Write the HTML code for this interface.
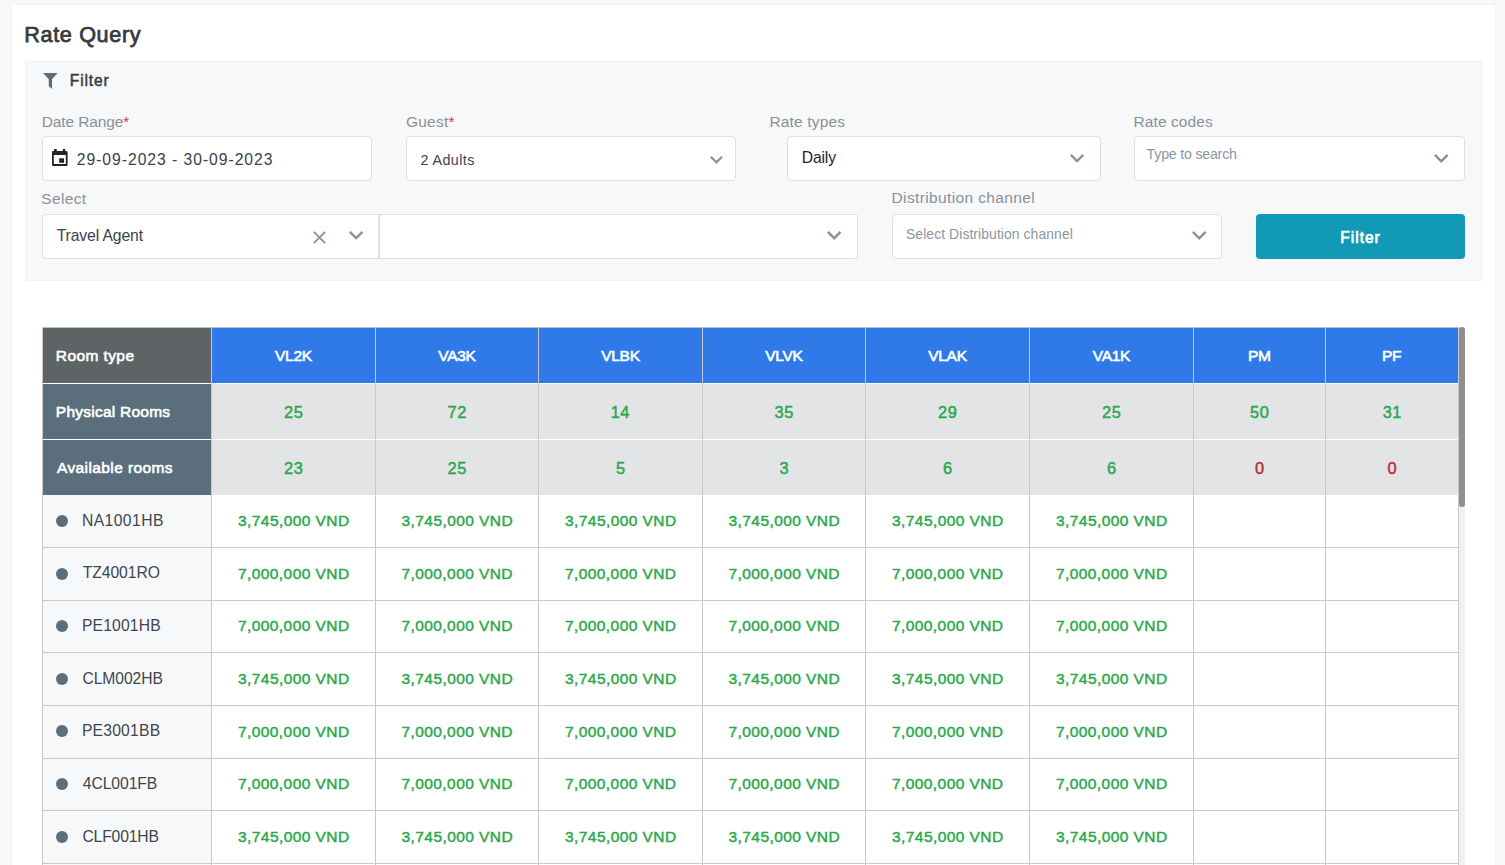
<!DOCTYPE html>
<html><head><meta charset="utf-8"><title>Rate Query</title>
<style>
html,body{margin:0;padding:0;width:1505px;height:865px;overflow:hidden;background:#f7f8fa;font-family:"Liberation Sans", sans-serif;}
body>div,body>svg{position:absolute;}
.t{white-space:nowrap;}
</style></head><body>
<div style="left:11px;top:4px;width:1485px;height:900px;background:#fff;border:1px solid #f1f3f5;box-sizing:border-box"></div>
<div class="t" style="left:24.30px;top:23.72px;font-size:21.6px;line-height:21.6px;font-weight:400;color:#343a40;-webkit-text-stroke:0.75px #343a40;letter-spacing:0.650px;">Rate Query</div>
<div style="left:25px;top:61px;width:1457px;height:220px;background:#f7f8fa;border:1px solid #f2f4f6;box-sizing:border-box"></div>
<svg style="left:43px;top:73px" width="15" height="16" viewBox="0 0 15 16"><path d="M0 0 H14.6 L9 6.2 V16 L5.8 13 V6.2 Z" fill="#5e6c79"/></svg>
<div class="t" style="left:69.80px;top:72.69px;font-size:15.6px;line-height:15.6px;font-weight:400;color:#343a40;-webkit-text-stroke:0.45px #343a40;letter-spacing:0.866px;">Filter</div>
<div class="t" style="left:41.80px;top:113.88px;font-size:15.5px;line-height:15.5px;font-weight:400;color:#8b9096;letter-spacing:-0.122px;">Date Range<span style="color:#e3342f">*</span></div>
<div class="t" style="left:405.90px;top:113.88px;font-size:15.5px;line-height:15.5px;font-weight:400;color:#8b9096;letter-spacing:0.269px;">Guest<span style="color:#e3342f">*</span></div>
<div class="t" style="left:769.40px;top:113.88px;font-size:15.5px;line-height:15.5px;font-weight:400;color:#8b9096;letter-spacing:0.173px;">Rate types</div>
<div class="t" style="left:1133.60px;top:113.88px;font-size:15.5px;line-height:15.5px;font-weight:400;color:#8b9096;letter-spacing:0.071px;">Rate codes</div>
<div style="left:42px;top:136px;width:330px;height:45px;background:#fff;border:1px solid #dde1e5;border-radius:4px;box-sizing:border-box"></div>
<div style="left:406px;top:136px;width:330px;height:45px;background:#fff;border:1px solid #dde1e5;border-radius:4px;box-sizing:border-box"></div>
<div style="left:787px;top:136px;width:314px;height:45px;background:#fff;border:1px solid #dde1e5;border-radius:4px;box-sizing:border-box"></div>
<div style="left:1134px;top:136px;width:331px;height:45px;background:#fff;border:1px solid #dde1e5;border-radius:4px;box-sizing:border-box"></div>
<svg style="left:51.9px;top:148.8px" width="16" height="17" viewBox="0 0 16 17"><rect x="2.1" y="0" width="2.6" height="3" fill="#212529"/><rect x="10.8" y="0" width="2.4" height="3" fill="#212529"/><path fill-rule="evenodd" fill="#212529" d="M1.2 2.1 H14.4 Q15.6 2.1 15.6 3.3 V15.7 Q15.6 16.9 14.4 16.9 H1.2 Q0 16.9 0 15.7 V3.3 Q0 2.1 1.2 2.1 Z M1.8 6.0 V15.1 H13.8 V6.0 Z"/><rect x="7.2" y="9.3" width="4.8" height="4.5" fill="#212529"/></svg>
<div class="t" style="left:76.80px;top:151.71px;font-size:15.7px;line-height:15.7px;font-weight:400;color:#3a4149;letter-spacing:0.966px;">29-09-2023 - 30-09-2023</div>
<div class="t" style="left:420.40px;top:152.80px;font-size:14.3px;line-height:14.3px;font-weight:400;color:#3c4450;letter-spacing:0.454px;">2 Adults</div>
<svg style="left:709.00px;top:155.00px" width="14.80" height="9.96" viewBox="0 0 14.80 9.96"><path d="M1.778 1.778 L7.400 7.400 L13.022 1.778" fill="none" stroke="#8693a0" stroke-width="2.2" stroke-linejoin="miter" stroke-linecap="butt"/></svg>
<div class="t" style="left:801.70px;top:149.61px;font-size:15.7px;line-height:15.7px;font-weight:400;color:#212529;letter-spacing:-0.136px;">Daily</div>
<svg style="left:1069.00px;top:152.80px" width="16.10" height="10.75" viewBox="0 0 16.10 10.75"><path d="M1.849 1.849 L8.050 8.050 L14.251 1.849" fill="none" stroke="#8693a0" stroke-width="2.4" stroke-linejoin="miter" stroke-linecap="butt"/></svg>
<div class="t" style="left:1146.60px;top:147.18px;font-size:14.2px;line-height:14.2px;font-weight:400;color:#8a96a3;letter-spacing:-0.211px;">Type to search</div>
<svg style="left:1433.30px;top:152.80px" width="16.50" height="10.95" viewBox="0 0 16.50 10.95"><path d="M1.849 1.849 L8.250 8.250 L14.651 1.849" fill="none" stroke="#8693a0" stroke-width="2.4" stroke-linejoin="miter" stroke-linecap="butt"/></svg>
<div class="t" style="left:41.30px;top:190.58px;font-size:15.5px;line-height:15.5px;font-weight:400;color:#8b9096;letter-spacing:0.345px;">Select</div>
<div class="t" style="left:891.50px;top:190.48px;font-size:15.5px;line-height:15.5px;font-weight:400;color:#8b9096;letter-spacing:0.374px;">Distribution channel</div>
<div style="left:42px;top:214px;width:337px;height:45px;background:#fff;border:1px solid #dde1e5;border-right:none;border-radius:4px 0 0 4px;box-sizing:border-box"></div>
<div style="left:378px;top:214px;width:480px;height:45px;background:#fff;border:1px solid #dde1e5;border-left:2px solid #dde1e5;border-radius:0 4px 4px 0;box-sizing:border-box"></div>
<div class="t" style="left:56.70px;top:227.61px;font-size:15.7px;line-height:15.7px;font-weight:400;color:#3a4149;letter-spacing:-0.097px;">Travel Agent</div>
<svg style="left:313px;top:231px" width="13" height="13" viewBox="0 0 13 13"><path d="M0.8 0.8 L12.2 12.2 M12.2 0.8 L0.8 12.2" stroke="#8592a0" stroke-width="1.8"/></svg>
<svg style="left:347.60px;top:230.10px" width="16.30" height="10.85" viewBox="0 0 16.30 10.85"><path d="M1.849 1.849 L8.150 8.150 L14.451 1.849" fill="none" stroke="#8693a0" stroke-width="2.4" stroke-linejoin="miter" stroke-linecap="butt"/></svg>
<svg style="left:826.40px;top:230.00px" width="16.40" height="10.90" viewBox="0 0 16.40 10.90"><path d="M1.849 1.849 L8.200 8.200 L14.551 1.849" fill="none" stroke="#8693a0" stroke-width="2.4" stroke-linejoin="miter" stroke-linecap="butt"/></svg>
<div style="left:892px;top:214px;width:330px;height:45px;background:#fff;border:1px solid #dde1e5;border-radius:4px;box-sizing:border-box"></div>
<div class="t" style="left:906.00px;top:228.03px;font-size:13.9px;line-height:13.9px;font-weight:400;color:#8a96a3;letter-spacing:0.089px;">Select Distribution channel</div>
<svg style="left:1190.50px;top:230.00px" width="16.50" height="10.95" viewBox="0 0 16.50 10.95"><path d="M1.849 1.849 L8.250 8.250 L14.651 1.849" fill="none" stroke="#8693a0" stroke-width="2.4" stroke-linejoin="miter" stroke-linecap="butt"/></svg>
<div style="left:1256px;top:214px;width:209px;height:45px;background:#1199b5;border-radius:4px"></div>
<div class="t" style="left:1340.30px;top:229.59px;font-size:15.6px;line-height:15.6px;font-weight:400;color:#fff;-webkit-text-stroke:0.7px #fff;letter-spacing:0.966px;">Filter</div>
<div style="left:42px;top:327px;width:169px;height:56px;background:#5e6366"></div>
<div style="left:211px;top:327px;width:1247px;height:56px;background:#2f79e9"></div>
<div style="left:42px;top:384px;width:169px;height:111px;background:#5a6f7b"></div>
<div style="left:211px;top:384px;width:1247px;height:111px;background:#e3e4e6"></div>
<div style="left:42px;top:383px;width:1416px;height:1px;background:#fff"></div>
<div style="left:42px;top:439px;width:1416px;height:1px;background:#fff"></div>
<div style="left:42px;top:327px;width:1417px;height:1px;background:#bdbdbd"></div>
<div style="left:42px;top:495px;width:169px;height:400px;background:#f7f8fa"></div>
<div style="left:42px;top:327px;width:1px;height:600px;background:#c7c8cc"></div>
<div style="left:211px;top:327px;width:1px;height:600px;background:#c7c8cc"></div>
<div style="left:375px;top:327px;width:1px;height:600px;background:#c7c8cc"></div>
<div style="left:538px;top:327px;width:1px;height:600px;background:#c7c8cc"></div>
<div style="left:702px;top:327px;width:1px;height:600px;background:#c7c8cc"></div>
<div style="left:865px;top:327px;width:1px;height:600px;background:#c7c8cc"></div>
<div style="left:1029px;top:327px;width:1px;height:600px;background:#c7c8cc"></div>
<div style="left:1193px;top:327px;width:1px;height:600px;background:#c7c8cc"></div>
<div style="left:1325px;top:327px;width:1px;height:600px;background:#c7c8cc"></div>
<div style="left:1458px;top:327px;width:1px;height:600px;background:#c7c8cc"></div>
<div style="left:42px;top:547px;width:1416px;height:1px;background:#c7c8cc"></div>
<div style="left:42px;top:600px;width:1416px;height:1px;background:#c7c8cc"></div>
<div style="left:42px;top:652px;width:1416px;height:1px;background:#c7c8cc"></div>
<div style="left:42px;top:705px;width:1416px;height:1px;background:#c7c8cc"></div>
<div style="left:42px;top:758px;width:1416px;height:1px;background:#c7c8cc"></div>
<div style="left:42px;top:810px;width:1416px;height:1px;background:#c7c8cc"></div>
<div style="left:42px;top:863px;width:1416px;height:1px;background:#c7c8cc"></div>
<div class="t" style="left:55.80px;top:347.88px;font-size:15.5px;line-height:15.5px;font-weight:400;color:#fff;-webkit-text-stroke:0.6px #fff;letter-spacing:0.409px;">Room type</div>
<div class="t" style="left:55.80px;top:403.88px;font-size:15.5px;line-height:15.5px;font-weight:400;color:#fff;-webkit-text-stroke:0.6px #fff;letter-spacing:0.241px;">Physical Rooms</div>
<div class="t" style="left:57.00px;top:459.88px;font-size:15.5px;line-height:15.5px;font-weight:400;color:#fff;-webkit-text-stroke:0.6px #fff;letter-spacing:0.397px;">Available rooms</div>
<div class="t" style="left:275.03px;top:347.98px;font-size:15.5px;line-height:15.5px;font-weight:400;color:#fff;-webkit-text-stroke:0.6px #fff;letter-spacing:-0.276px;">VL2K</div>
<div class="t" style="left:284.02px;top:404.12px;font-size:16.4px;line-height:16.4px;font-weight:400;color:#2aa84a;-webkit-text-stroke:0.45px #2aa84a;letter-spacing:0.529px;">25</div>
<div class="t" style="left:284.07px;top:459.92px;font-size:16.4px;line-height:16.4px;font-weight:400;color:#2aa84a;-webkit-text-stroke:0.45px #2aa84a;letter-spacing:0.529px;">23</div>
<div class="t" style="left:438.24px;top:347.98px;font-size:15.5px;line-height:15.5px;font-weight:400;color:#fff;-webkit-text-stroke:0.6px #fff;letter-spacing:-0.276px;">VA3K</div>
<div class="t" style="left:447.62px;top:404.12px;font-size:16.4px;line-height:16.4px;font-weight:400;color:#2aa84a;-webkit-text-stroke:0.45px #2aa84a;letter-spacing:0.529px;">72</div>
<div class="t" style="left:447.52px;top:459.92px;font-size:16.4px;line-height:16.4px;font-weight:400;color:#2aa84a;-webkit-text-stroke:0.45px #2aa84a;letter-spacing:0.529px;">25</div>
<div class="t" style="left:601.17px;top:347.98px;font-size:15.5px;line-height:15.5px;font-weight:400;color:#fff;-webkit-text-stroke:0.6px #fff;letter-spacing:-0.276px;">VLBK</div>
<div class="t" style="left:610.73px;top:404.12px;font-size:16.4px;line-height:16.4px;font-weight:400;color:#2aa84a;-webkit-text-stroke:0.45px #2aa84a;letter-spacing:0.529px;">14</div>
<div class="t" style="left:615.95px;top:459.92px;font-size:16.4px;line-height:16.4px;font-weight:400;color:#2aa84a;-webkit-text-stroke:0.45px #2aa84a;letter-spacing:0.529px;">5</div>
<div class="t" style="left:765.24px;top:347.98px;font-size:15.5px;line-height:15.5px;font-weight:400;color:#fff;-webkit-text-stroke:0.6px #fff;letter-spacing:-0.276px;">VLVK</div>
<div class="t" style="left:774.62px;top:404.12px;font-size:16.4px;line-height:16.4px;font-weight:400;color:#2aa84a;-webkit-text-stroke:0.45px #2aa84a;letter-spacing:0.529px;">35</div>
<div class="t" style="left:779.50px;top:459.92px;font-size:16.4px;line-height:16.4px;font-weight:400;color:#2aa84a;-webkit-text-stroke:0.45px #2aa84a;letter-spacing:0.529px;">3</div>
<div class="t" style="left:928.17px;top:347.98px;font-size:15.5px;line-height:15.5px;font-weight:400;color:#fff;-webkit-text-stroke:0.6px #fff;letter-spacing:-0.276px;">VLAK</div>
<div class="t" style="left:938.07px;top:404.12px;font-size:16.4px;line-height:16.4px;font-weight:400;color:#2aa84a;-webkit-text-stroke:0.45px #2aa84a;letter-spacing:0.529px;">29</div>
<div class="t" style="left:942.90px;top:459.92px;font-size:16.4px;line-height:16.4px;font-weight:400;color:#2aa84a;-webkit-text-stroke:0.45px #2aa84a;letter-spacing:0.529px;">6</div>
<div class="t" style="left:1092.74px;top:347.98px;font-size:15.5px;line-height:15.5px;font-weight:400;color:#fff;-webkit-text-stroke:0.6px #fff;letter-spacing:-0.276px;">VA1K</div>
<div class="t" style="left:1102.02px;top:404.12px;font-size:16.4px;line-height:16.4px;font-weight:400;color:#2aa84a;-webkit-text-stroke:0.45px #2aa84a;letter-spacing:0.529px;">25</div>
<div class="t" style="left:1106.90px;top:459.92px;font-size:16.4px;line-height:16.4px;font-weight:400;color:#2aa84a;-webkit-text-stroke:0.45px #2aa84a;letter-spacing:0.529px;">6</div>
<div class="t" style="left:1248.02px;top:347.98px;font-size:15.5px;line-height:15.5px;font-weight:400;color:#fff;-webkit-text-stroke:0.6px #fff;letter-spacing:-0.276px;">PM</div>
<div class="t" style="left:1250.12px;top:404.12px;font-size:16.4px;line-height:16.4px;font-weight:400;color:#2aa84a;-webkit-text-stroke:0.45px #2aa84a;letter-spacing:0.529px;">50</div>
<div class="t" style="left:1254.95px;top:459.92px;font-size:16.4px;line-height:16.4px;font-weight:400;color:#bd2a2e;-webkit-text-stroke:0.45px #bd2a2e;letter-spacing:0.529px;">0</div>
<div class="t" style="left:1381.92px;top:347.98px;font-size:15.5px;line-height:15.5px;font-weight:400;color:#fff;-webkit-text-stroke:0.6px #fff;letter-spacing:-0.276px;">PF</div>
<div class="t" style="left:1382.67px;top:404.12px;font-size:16.4px;line-height:16.4px;font-weight:400;color:#2aa84a;-webkit-text-stroke:0.45px #2aa84a;letter-spacing:0.529px;">31</div>
<div class="t" style="left:1387.45px;top:459.92px;font-size:16.4px;line-height:16.4px;font-weight:400;color:#bd2a2e;-webkit-text-stroke:0.45px #bd2a2e;letter-spacing:0.529px;">0</div>
<div style="left:56px;top:514.8px;width:12px;height:12px;border-radius:50%;background:#5a6f7b"></div>
<div class="t" style="left:81.90px;top:512.81px;font-size:15.7px;line-height:15.7px;font-weight:400;color:#3f464e;letter-spacing:0.432px;">NA1001HB</div>
<div class="t" style="left:238.03px;top:512.98px;font-size:15.5px;line-height:15.5px;font-weight:400;color:#2aa84a;-webkit-text-stroke:0.45px #2aa84a;letter-spacing:0.430px;">3,745,000 VND</div>
<div class="t" style="left:401.53px;top:512.98px;font-size:15.5px;line-height:15.5px;font-weight:400;color:#2aa84a;-webkit-text-stroke:0.45px #2aa84a;letter-spacing:0.430px;">3,745,000 VND</div>
<div class="t" style="left:565.02px;top:512.98px;font-size:15.5px;line-height:15.5px;font-weight:400;color:#2aa84a;-webkit-text-stroke:0.45px #2aa84a;letter-spacing:0.430px;">3,745,000 VND</div>
<div class="t" style="left:728.52px;top:512.98px;font-size:15.5px;line-height:15.5px;font-weight:400;color:#2aa84a;-webkit-text-stroke:0.45px #2aa84a;letter-spacing:0.430px;">3,745,000 VND</div>
<div class="t" style="left:892.02px;top:512.98px;font-size:15.5px;line-height:15.5px;font-weight:400;color:#2aa84a;-webkit-text-stroke:0.45px #2aa84a;letter-spacing:0.430px;">3,745,000 VND</div>
<div class="t" style="left:1056.02px;top:512.98px;font-size:15.5px;line-height:15.5px;font-weight:400;color:#2aa84a;-webkit-text-stroke:0.45px #2aa84a;letter-spacing:0.430px;">3,745,000 VND</div>
<div style="left:56px;top:567.5px;width:12px;height:12px;border-radius:50%;background:#5a6f7b"></div>
<div class="t" style="left:82.80px;top:565.46px;font-size:15.7px;line-height:15.7px;font-weight:400;color:#3f464e;letter-spacing:-0.078px;">TZ4001RO</div>
<div class="t" style="left:237.93px;top:565.63px;font-size:15.5px;line-height:15.5px;font-weight:400;color:#2aa84a;-webkit-text-stroke:0.45px #2aa84a;letter-spacing:0.430px;">7,000,000 VND</div>
<div class="t" style="left:401.42px;top:565.63px;font-size:15.5px;line-height:15.5px;font-weight:400;color:#2aa84a;-webkit-text-stroke:0.45px #2aa84a;letter-spacing:0.430px;">7,000,000 VND</div>
<div class="t" style="left:564.92px;top:565.63px;font-size:15.5px;line-height:15.5px;font-weight:400;color:#2aa84a;-webkit-text-stroke:0.45px #2aa84a;letter-spacing:0.430px;">7,000,000 VND</div>
<div class="t" style="left:728.42px;top:565.63px;font-size:15.5px;line-height:15.5px;font-weight:400;color:#2aa84a;-webkit-text-stroke:0.45px #2aa84a;letter-spacing:0.430px;">7,000,000 VND</div>
<div class="t" style="left:891.92px;top:565.63px;font-size:15.5px;line-height:15.5px;font-weight:400;color:#2aa84a;-webkit-text-stroke:0.45px #2aa84a;letter-spacing:0.430px;">7,000,000 VND</div>
<div class="t" style="left:1055.93px;top:565.63px;font-size:15.5px;line-height:15.5px;font-weight:400;color:#2aa84a;-webkit-text-stroke:0.45px #2aa84a;letter-spacing:0.430px;">7,000,000 VND</div>
<div style="left:56px;top:620.1px;width:12px;height:12px;border-radius:50%;background:#5a6f7b"></div>
<div class="t" style="left:81.90px;top:618.11px;font-size:15.7px;line-height:15.7px;font-weight:400;color:#3f464e;letter-spacing:0.170px;">PE1001HB</div>
<div class="t" style="left:237.93px;top:618.28px;font-size:15.5px;line-height:15.5px;font-weight:400;color:#2aa84a;-webkit-text-stroke:0.45px #2aa84a;letter-spacing:0.430px;">7,000,000 VND</div>
<div class="t" style="left:401.42px;top:618.28px;font-size:15.5px;line-height:15.5px;font-weight:400;color:#2aa84a;-webkit-text-stroke:0.45px #2aa84a;letter-spacing:0.430px;">7,000,000 VND</div>
<div class="t" style="left:564.92px;top:618.28px;font-size:15.5px;line-height:15.5px;font-weight:400;color:#2aa84a;-webkit-text-stroke:0.45px #2aa84a;letter-spacing:0.430px;">7,000,000 VND</div>
<div class="t" style="left:728.42px;top:618.28px;font-size:15.5px;line-height:15.5px;font-weight:400;color:#2aa84a;-webkit-text-stroke:0.45px #2aa84a;letter-spacing:0.430px;">7,000,000 VND</div>
<div class="t" style="left:891.92px;top:618.28px;font-size:15.5px;line-height:15.5px;font-weight:400;color:#2aa84a;-webkit-text-stroke:0.45px #2aa84a;letter-spacing:0.430px;">7,000,000 VND</div>
<div class="t" style="left:1055.93px;top:618.28px;font-size:15.5px;line-height:15.5px;font-weight:400;color:#2aa84a;-webkit-text-stroke:0.45px #2aa84a;letter-spacing:0.430px;">7,000,000 VND</div>
<div style="left:56px;top:672.8px;width:12px;height:12px;border-radius:50%;background:#5a6f7b"></div>
<div class="t" style="left:82.40px;top:670.76px;font-size:15.7px;line-height:15.7px;font-weight:400;color:#3f464e;letter-spacing:-0.083px;">CLM002HB</div>
<div class="t" style="left:238.03px;top:670.93px;font-size:15.5px;line-height:15.5px;font-weight:400;color:#2aa84a;-webkit-text-stroke:0.45px #2aa84a;letter-spacing:0.430px;">3,745,000 VND</div>
<div class="t" style="left:401.53px;top:670.93px;font-size:15.5px;line-height:15.5px;font-weight:400;color:#2aa84a;-webkit-text-stroke:0.45px #2aa84a;letter-spacing:0.430px;">3,745,000 VND</div>
<div class="t" style="left:565.02px;top:670.93px;font-size:15.5px;line-height:15.5px;font-weight:400;color:#2aa84a;-webkit-text-stroke:0.45px #2aa84a;letter-spacing:0.430px;">3,745,000 VND</div>
<div class="t" style="left:728.52px;top:670.93px;font-size:15.5px;line-height:15.5px;font-weight:400;color:#2aa84a;-webkit-text-stroke:0.45px #2aa84a;letter-spacing:0.430px;">3,745,000 VND</div>
<div class="t" style="left:892.02px;top:670.93px;font-size:15.5px;line-height:15.5px;font-weight:400;color:#2aa84a;-webkit-text-stroke:0.45px #2aa84a;letter-spacing:0.430px;">3,745,000 VND</div>
<div class="t" style="left:1056.02px;top:670.93px;font-size:15.5px;line-height:15.5px;font-weight:400;color:#2aa84a;-webkit-text-stroke:0.45px #2aa84a;letter-spacing:0.430px;">3,745,000 VND</div>
<div style="left:56px;top:725.4px;width:12px;height:12px;border-radius:50%;background:#5a6f7b"></div>
<div class="t" style="left:81.90px;top:723.41px;font-size:15.7px;line-height:15.7px;font-weight:400;color:#3f464e;letter-spacing:0.208px;">PE3001BB</div>
<div class="t" style="left:237.93px;top:723.58px;font-size:15.5px;line-height:15.5px;font-weight:400;color:#2aa84a;-webkit-text-stroke:0.45px #2aa84a;letter-spacing:0.430px;">7,000,000 VND</div>
<div class="t" style="left:401.42px;top:723.58px;font-size:15.5px;line-height:15.5px;font-weight:400;color:#2aa84a;-webkit-text-stroke:0.45px #2aa84a;letter-spacing:0.430px;">7,000,000 VND</div>
<div class="t" style="left:564.92px;top:723.58px;font-size:15.5px;line-height:15.5px;font-weight:400;color:#2aa84a;-webkit-text-stroke:0.45px #2aa84a;letter-spacing:0.430px;">7,000,000 VND</div>
<div class="t" style="left:728.42px;top:723.58px;font-size:15.5px;line-height:15.5px;font-weight:400;color:#2aa84a;-webkit-text-stroke:0.45px #2aa84a;letter-spacing:0.430px;">7,000,000 VND</div>
<div class="t" style="left:891.92px;top:723.58px;font-size:15.5px;line-height:15.5px;font-weight:400;color:#2aa84a;-webkit-text-stroke:0.45px #2aa84a;letter-spacing:0.430px;">7,000,000 VND</div>
<div class="t" style="left:1055.93px;top:723.58px;font-size:15.5px;line-height:15.5px;font-weight:400;color:#2aa84a;-webkit-text-stroke:0.45px #2aa84a;letter-spacing:0.430px;">7,000,000 VND</div>
<div style="left:56px;top:778.1px;width:12px;height:12px;border-radius:50%;background:#5a6f7b"></div>
<div class="t" style="left:82.80px;top:776.06px;font-size:15.7px;line-height:15.7px;font-weight:400;color:#3f464e;letter-spacing:-0.069px;">4CL001FB</div>
<div class="t" style="left:237.93px;top:776.23px;font-size:15.5px;line-height:15.5px;font-weight:400;color:#2aa84a;-webkit-text-stroke:0.45px #2aa84a;letter-spacing:0.430px;">7,000,000 VND</div>
<div class="t" style="left:401.42px;top:776.23px;font-size:15.5px;line-height:15.5px;font-weight:400;color:#2aa84a;-webkit-text-stroke:0.45px #2aa84a;letter-spacing:0.430px;">7,000,000 VND</div>
<div class="t" style="left:564.92px;top:776.23px;font-size:15.5px;line-height:15.5px;font-weight:400;color:#2aa84a;-webkit-text-stroke:0.45px #2aa84a;letter-spacing:0.430px;">7,000,000 VND</div>
<div class="t" style="left:728.42px;top:776.23px;font-size:15.5px;line-height:15.5px;font-weight:400;color:#2aa84a;-webkit-text-stroke:0.45px #2aa84a;letter-spacing:0.430px;">7,000,000 VND</div>
<div class="t" style="left:891.92px;top:776.23px;font-size:15.5px;line-height:15.5px;font-weight:400;color:#2aa84a;-webkit-text-stroke:0.45px #2aa84a;letter-spacing:0.430px;">7,000,000 VND</div>
<div class="t" style="left:1055.93px;top:776.23px;font-size:15.5px;line-height:15.5px;font-weight:400;color:#2aa84a;-webkit-text-stroke:0.45px #2aa84a;letter-spacing:0.430px;">7,000,000 VND</div>
<div style="left:56px;top:830.7px;width:12px;height:12px;border-radius:50%;background:#5a6f7b"></div>
<div class="t" style="left:82.40px;top:828.71px;font-size:15.7px;line-height:15.7px;font-weight:400;color:#3f464e;letter-spacing:-0.142px;">CLF001HB</div>
<div class="t" style="left:238.03px;top:828.88px;font-size:15.5px;line-height:15.5px;font-weight:400;color:#2aa84a;-webkit-text-stroke:0.45px #2aa84a;letter-spacing:0.430px;">3,745,000 VND</div>
<div class="t" style="left:401.53px;top:828.88px;font-size:15.5px;line-height:15.5px;font-weight:400;color:#2aa84a;-webkit-text-stroke:0.45px #2aa84a;letter-spacing:0.430px;">3,745,000 VND</div>
<div class="t" style="left:565.02px;top:828.88px;font-size:15.5px;line-height:15.5px;font-weight:400;color:#2aa84a;-webkit-text-stroke:0.45px #2aa84a;letter-spacing:0.430px;">3,745,000 VND</div>
<div class="t" style="left:728.52px;top:828.88px;font-size:15.5px;line-height:15.5px;font-weight:400;color:#2aa84a;-webkit-text-stroke:0.45px #2aa84a;letter-spacing:0.430px;">3,745,000 VND</div>
<div class="t" style="left:892.02px;top:828.88px;font-size:15.5px;line-height:15.5px;font-weight:400;color:#2aa84a;-webkit-text-stroke:0.45px #2aa84a;letter-spacing:0.430px;">3,745,000 VND</div>
<div class="t" style="left:1056.02px;top:828.88px;font-size:15.5px;line-height:15.5px;font-weight:400;color:#2aa84a;-webkit-text-stroke:0.45px #2aa84a;letter-spacing:0.430px;">3,745,000 VND</div>
<div style="left:1459px;top:327px;width:6px;height:540px;background:#f1f1f1"></div>
<div style="left:1459px;top:327px;width:6px;height:180px;background:#8f8f8f;border-radius:3px"></div>
</body></html>
